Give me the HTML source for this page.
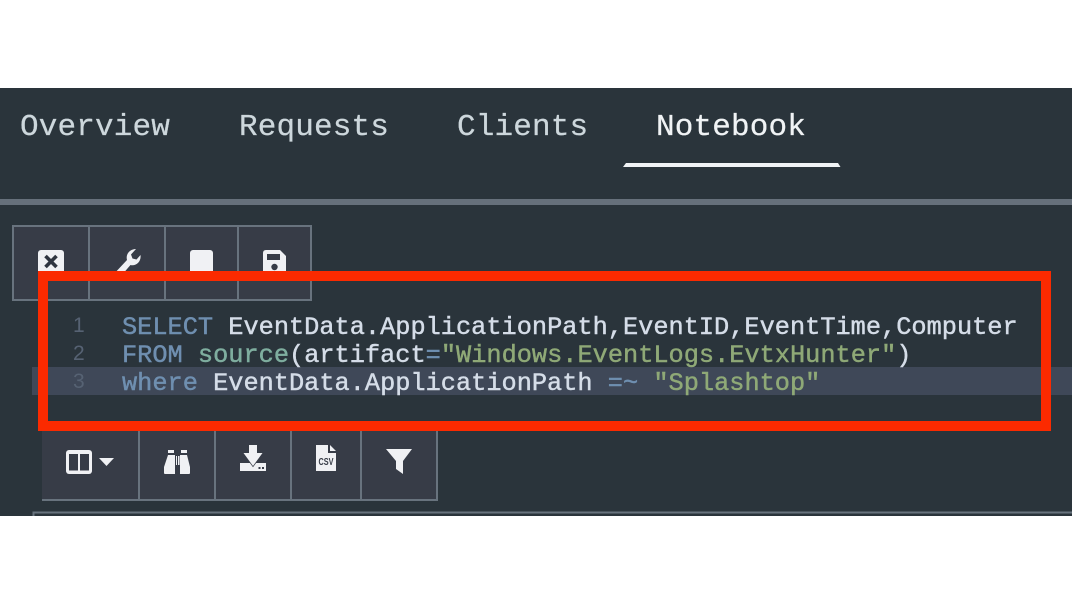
<!DOCTYPE html>
<html><head><meta charset="utf-8">
<style>
html,body{margin:0;padding:0;background:#fff;width:1072px;height:603px;overflow:hidden}
.a{position:absolute}
#app{position:absolute;left:0;top:88px;width:1072px;height:428px;background:#2a343b}
.tab{position:absolute;top:108px;font:31px/40px "Liberation Mono",monospace;letter-spacing:.15px;color:#cdd7dc;white-space:pre;-webkit-text-stroke:.25px}
.code{position:absolute;left:122px;font:25.3px/28px "Liberation Mono",monospace;color:#d5dde8;white-space:pre;-webkit-text-stroke:.45px}
.n{position:absolute;left:73px;font:21px/28px "Liberation Sans",sans-serif;color:#566273}
.k{color:#6f8fb0}.f{color:#7fae9f}.s{color:#8fa977}.o{color:#6f8fb0}.p{color:#a9b8c9}
svg{position:absolute;left:0;top:0}
</style></head><body>
<div id="app"></div>
<div class="tab" style="left:20px">Overview</div>
<div class="tab" style="left:239px">Requests</div>
<div class="tab" style="left:457px">Clients</div>
<div class="tab" style="left:656px;color:#f0f3f5">Notebook</div>

<svg width="1072" height="603" viewBox="0 0 1072 603">
<polygon points="626,163 838,163 840.5,167 623,167" fill="#f0f3f5"/>
<rect x="0" y="199" width="1072" height="6" fill="#66707b"/>
<!-- top toolbar -->
<rect x="13" y="226" width="298" height="74" fill="#373c47" stroke="#68737e" stroke-width="2"/>
<path d="M89 226V300M165 226V300M238 226V300" stroke="#68737e" stroke-width="2"/>
<rect x="38" y="250" width="26" height="26" rx="3" fill="#f0f1f4"/>
<path d="M45.500 256L56.500 267M56.500 256L45.500 267" stroke="#2f3540" stroke-width="3.600"/>
<path d="M112 276L127 260C125.500 254.500 129.500 249 136 249L131 254.500L132.500 258.500L136.500 259.500L140.500 255C141.500 262 135.500 266.500 130.500 265L121 276Z" fill="#f0f1f4"/>
<rect x="190" y="250" width="23" height="26" rx="3" fill="#f0f1f4"/>
<path d="M266 250H280L286 256V276H263V253Q263 250 266 250Z" fill="#f0f1f4"/>
<rect x="267" y="254" width="13" height="6" fill="#373c47"/>
<circle cx="274.500" cy="267" r="3.200" fill="#373c47"/>
<!-- code current line -->
<rect x="32" y="367" width="1040" height="28" fill="#3f4858"/>
<!-- bottom toolbar -->
<rect x="42" y="431" width="395" height="69" fill="#373c47"/>
<path d="M42 500H438M139 431V500M215 431V500M291 431V500M361 431V500M437 431V500" stroke="#68737e" stroke-width="2" fill="none"/>
<rect x="66" y="450" width="26" height="24" rx="3" fill="#f0f1f4"/>
<rect x="69" y="454" width="9" height="16.500" fill="#373c47"/>
<rect x="80" y="454" width="9" height="16.500" fill="#373c47"/>
<polygon points="99,458 114,458 106.500,466" fill="#f0f1f4"/>
<!-- binoculars -->
<path d="M168 450H174V453H168ZM181 450H187V453H181Z" fill="#f0f1f4"/>
<path d="M168 455H175V474H165Q164 474 164 473V467ZM187 455H180V474H189Q190 474 190 473V467Z" fill="#f0f1f4"/>
<path d="M176 456H177V465H176ZM178 456H179.500V465H178Z" fill="#f0f1f4"/>
<!-- download -->
<path d="M240 463H266V471H240Z" fill="#f0f1f4"/>
<path d="M249 445H257V453H262.500L253 466L243.500 453H249Z" fill="#f0f1f4" stroke="#373c47" stroke-width="1.500" paint-order="stroke"/>
<rect x="258.500" y="467" width="2" height="2" fill="#373c47"/><rect x="262" y="467" width="2" height="2" fill="#373c47"/>
<!-- csv -->
<path d="M316 445H328V453H336V471H316ZM330 445L336 451H330Z" fill="#f0f1f4"/>
<text x="318.500" y="465" font-family="Liberation Sans,sans-serif" font-size="10" font-weight="700" fill="#373c47" textLength="15" lengthAdjust="spacingAndGlyphs">CSV</text>
<path d="M386 449H412L403 461V474L396 469V461Z" fill="#f0f1f4"/>
<!-- lower box -->
<path d="M33.500 516V512.500H1072" stroke="#68737e" stroke-width="2" fill="none"/>
</svg>

<div class="n" style="top:312px">1</div>
<div class="n" style="top:340px">2</div>
<div class="n" style="top:368px">3</div>
<div class="code" style="top:314px"><span class="k">SELECT</span> EventData.ApplicationPath,EventID,EventTime,Computer</div>
<div class="code" style="top:342px"><span class="k">FROM</span> <span class="f">source</span>(artifact<span class="o">=</span><span class="s">"Windows.EventLogs.EvtxHunter"</span>)</div>
<div class="code" style="top:370px"><span class="k">where</span> EventData.ApplicationPath <span class="o">=~</span> <span class="s">"Splashtop"</span></div>

<svg width="1072" height="603" viewBox="0 0 1072 603" style="pointer-events:none">
<rect x="43" y="276" width="1003" height="150" fill="none" stroke="#fb2a00" stroke-width="10"/>
</svg>
</body></html>
